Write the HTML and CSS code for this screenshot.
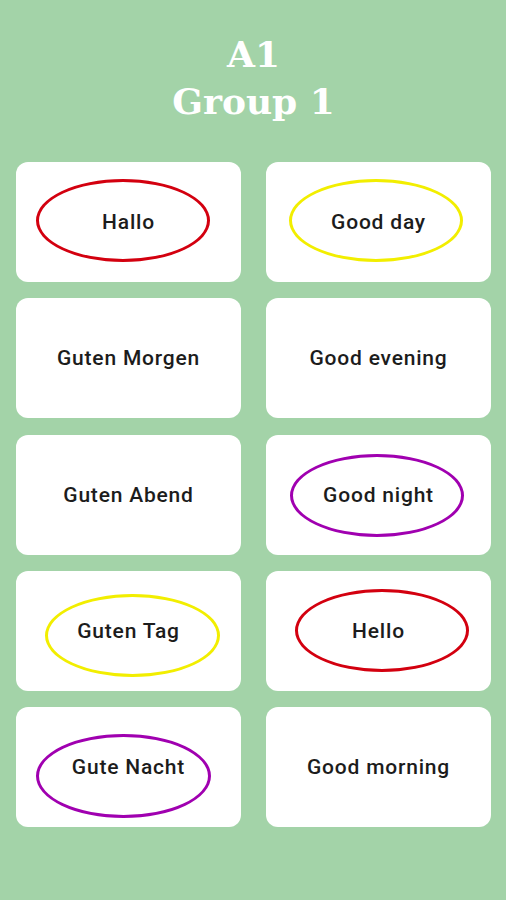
FILE: index.html
```html
<!DOCTYPE html>
<html lang="en">
<head>
    <meta charset="UTF-8">
    <meta name="viewport" content="width=device-width, initial-scale=1.0">
    <title>A1 Group 1</title>
    <link rel="stylesheet" href="styles.css">
</head>
<body>
    <div class="header">
        <h1 class="title">A1<br>Group 1</h1>
    </div>
    <div class="grid">
        <div class="card">
            <span class="ring ring-red ring-hallo"></span>
            <span class="word">Hallo</span>
        </div>
        <div class="card">
            <span class="ring ring-yellow ring-goodday"></span>
            <span class="word">Good day</span>
        </div>
        <div class="card">
            <span class="word">Guten Morgen</span>
        </div>
        <div class="card">
            <span class="word">Good evening</span>
        </div>
        <div class="card">
            <span class="word">Guten Abend</span>
        </div>
        <div class="card">
            <span class="ring ring-purple ring-goodnight"></span>
            <span class="word">Good night</span>
        </div>
        <div class="card">
            <span class="ring ring-yellow ring-gutentag"></span>
            <span class="word">Guten Tag</span>
        </div>
        <div class="card">
            <span class="ring ring-red ring-hello"></span>
            <span class="word">Hello</span>
        </div>
        <div class="card">
            <span class="ring ring-purple ring-gutenacht"></span>
            <span class="word">Gute Nacht</span>
        </div>
        <div class="card">
            <span class="word">Good morning</span>
        </div>
    </div>
</body>
</html>
```

FILE: styles.css
```css
body {
    background-color: #a3d3a8;
    font-family: 'Roboto', sans-serif;
    margin: 0;
    padding: 0 15px 0 16px;
    height: 900px;
    box-sizing: border-box;
    overflow: hidden;
}
.header {
    text-align: center;
    padding-top: 31px;
    height: 162px;
    box-sizing: border-box;
}
.title {
    margin: 0;
    font-family: 'DejaVu Serif', serif;
    font-weight: bold;
    font-size: 36px;
    line-height: 47px;
    color: #ffffff;
}
.grid {
    display: grid;
    grid-template-columns: 1fr 1fr;
    grid-auto-rows: 120px;
    column-gap: 25px;
    row-gap: 16.3px;
}
.card {
    position: relative;
    background-color: #ffffff;
    border-radius: 12px;
    display: flex;
    align-items: center;
    justify-content: center;
}
.word {
    position: relative;
    font-size: 21px;
    font-weight: 500;
    color: #1c1c1c;
    letter-spacing: 0.8px;
}
.ring {
    position: absolute;
    width: 174px;
    height: 83px;
    border: 3px solid;
    border-radius: 50%;
    box-sizing: border-box;
}
.ring-red {
    border-color: #d3000f;
}
.ring-yellow {
    border-color: #f2ee00;
}
.ring-purple {
    border-color: #a000b0;
}
.ring-hallo {
    left: 20px;
    top: 17px;
}
.ring-goodday {
    left: 23px;
    top: 17px;
}
.ring-goodnight {
    left: 24px;
    top: 19px;
}
.ring-gutentag {
    left: 29px;
    top: 23px;
    width: 175px;
}
.ring-hello {
    left: 29px;
    top: 18px;
}
.ring-gutenacht {
    left: 20px;
    top: 27px;
    width: 175px;
    height: 84px;
}
```
